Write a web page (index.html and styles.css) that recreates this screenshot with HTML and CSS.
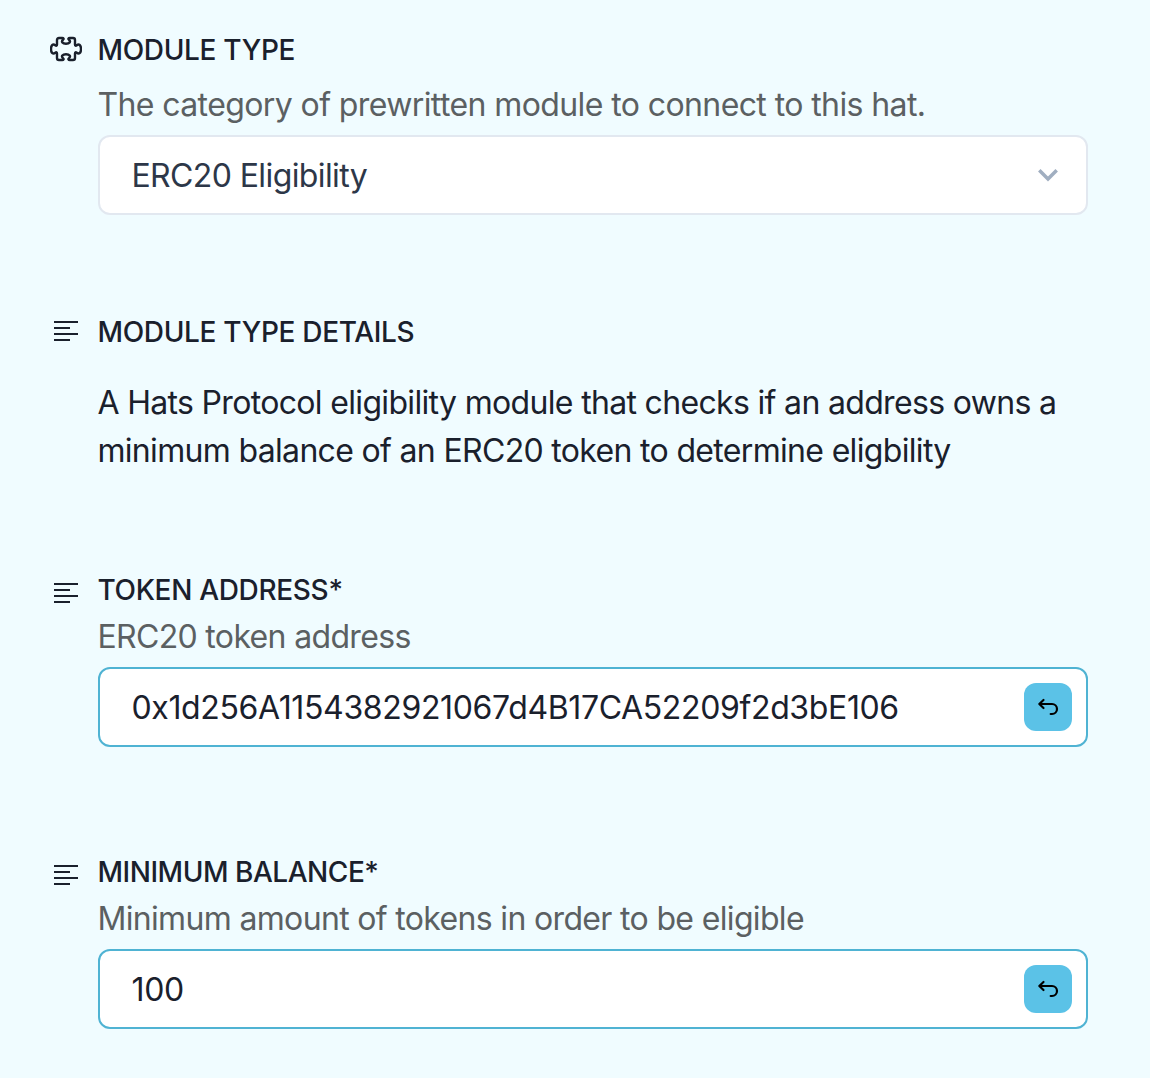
FILE: index.html
```html
<!DOCTYPE html>
<html lang="en">
<head>
<meta charset="utf-8">
<title>Module settings</title>
<link rel="stylesheet" href="styles.css">
</head>
<body>
<form class="form">
  <section class="field field-type">
    <svg class="icon puzzle" viewBox="0 0 32 32"><path d="M9 5h3.200c1.400 0 1.800.9.900 1.700C10.800 8.600 12.500 10.700 16 10.700s5.200-2.100 2.900-4c-.9-.8-.5-1.700.9-1.700H23c1.300 0 2 .7 2 2v4.600c0 1.200.8 1.400 1.700.7C29 10.500 31 12 31 16s-2 5.500-4.300 3.700c-.9-.7-1.700-.5-1.700.7V25c0 1.300-.7 2-2 2h-3.200c-1.400 0-1.800-.9-.9-1.700 2.300-1.900.6-4-2.900-4s-5.200 2.100-2.900 4c.9.8.5 1.700-.9 1.700H9c-1.300 0-2-.7-2-2v-4.600c0-1.200-.8-1.400-1.700-.7C3 21.500 1 20 1 16s2-5.500 4.300-3.700c.9.700 1.700.5 1.700-.7V7c0-1.300.7-2 2-2z"/></svg>
    <div class="content">
      <h2 class="label">MODULE TYPE</h2>
      <p class="hint">The category of prewritten module to connect to this hat.</p>
      <div class="control select"><span class="value">ERC20 Eligibility</span><svg class="chevron" viewBox="0 0 24 16"><path d="M3.300 3.300l8.700 8.700 8.700-8.700"/></svg></div>
    </div>
  </section>
  <section class="field field-details">
    <svg class="icon" viewBox="0 0 32 32"><path d="M4 6h24M4 12h16M4 18h24M4 24h16"/></svg>
    <div class="content">
      <h2 class="label">MODULE TYPE DETAILS</h2>
      <p class="description">A Hats Protocol eligibility module that checks if an address owns a<br>minimum balance of an ERC20 token to determine eligbility</p>
    </div>
  </section>
  <section class="field field-token">
    <svg class="icon" viewBox="0 0 32 32"><path d="M4 6h24M4 12h16M4 18h24M4 24h16"/></svg>
    <div class="content">
      <h2 class="label">TOKEN ADDRESS*</h2>
      <p class="hint">ERC20 token address</p>
      <div class="control edited"><span class="value">0x1d256A1154382921067d4B17CA52209f2d3bE106</span><button class="undo" type="button" aria-label="Undo"><svg viewBox="0 0 24 24"><path d="M7.500 5L3.300 9l4.200 4M3.300 9H16a5 5 0 0 1 0 10h-1.300"/></svg></button></div>
    </div>
  </section>
  <section class="field field-balance">
    <svg class="icon" viewBox="0 0 32 32"><path d="M4 6h24M4 12h16M4 18h24M4 24h16"/></svg>
    <div class="content">
      <h2 class="label">MINIMUM BALANCE*</h2>
      <p class="hint">Minimum amount of tokens in order to be eligible</p>
      <div class="control edited"><span class="value">100</span><button class="undo" type="button" aria-label="Undo"><svg viewBox="0 0 24 24"><path d="M7.500 5L3.300 9l4.200 4M3.300 9H16a5 5 0 0 1 0 10h-1.300"/></svg></button></div>
    </div>
  </section>
</form>
</body>
</html>
```
FILE: styles.css
```css
* { box-sizing: border-box; }
body { margin: 0; background: #f0fcff; color: #1a202c; font-family: Inter, sans-serif; }
.form { height: 1078px; padding: 30px 62px 0 50px; }
.field { display: flex; gap: 16px; }
.field-type { height: 282px; }
.field-details { height: 258px; }
.field-token { height: 282px; }
.icon { width: 32px; height: 32px; flex: none; margin-top: 4px; fill: none; stroke: #1a202c; stroke-width: 2; }
.puzzle { margin-top: 3px; stroke-width: 2.4; }
.field-token .icon, .field-balance .icon { margin-top: 8px; }
.content { flex: 1; min-width: 0; }
.label, .hint, .description { margin: 0 0 0 -0.6px; white-space: nowrap; }
.label { font-size: 28px; font-weight: 500; line-height: 40px; letter-spacing: -0.32px; }
.field-balance .label { letter-spacing: -0.46px; }
.hint { margin-top: 3px; padding-bottom: 6px; color: #5b6062; font-size: 32px; line-height: 48px; letter-spacing: -0.66px; }
.field-type .hint { margin-top: 11px; letter-spacing: -0.6px; }
.description { margin-top: 27px; font-size: 32px; line-height: 48px; letter-spacing: -0.67px; }
.control { display: flex; align-items: center; justify-content: space-between; height: 80px; padding: 0 14px 0 31.5px; border: 2px solid #e2e8f0; border-radius: 12px; background: #fff; font-size: 32px; letter-spacing: -0.36px; }
.select { color: #2d3748; letter-spacing: -0.61px; }
.edited { border-color: #4fb3d3; }
.edited .value { padding-top: 1px; }
.undo { display: grid; place-items: center; width: 48px; height: 48px; padding: 0; border: 0; border-radius: 12px; background: #5bc2e7; }
.undo svg { width: 24px; height: 24px; fill: none; stroke: #000; stroke-width: 2.2; stroke-linecap: round; stroke-linejoin: round; }
.chevron { width: 24px; height: 16px; margin-right: 12px; fill: none; stroke: #a0aec0; stroke-width: 3.5; }
```
